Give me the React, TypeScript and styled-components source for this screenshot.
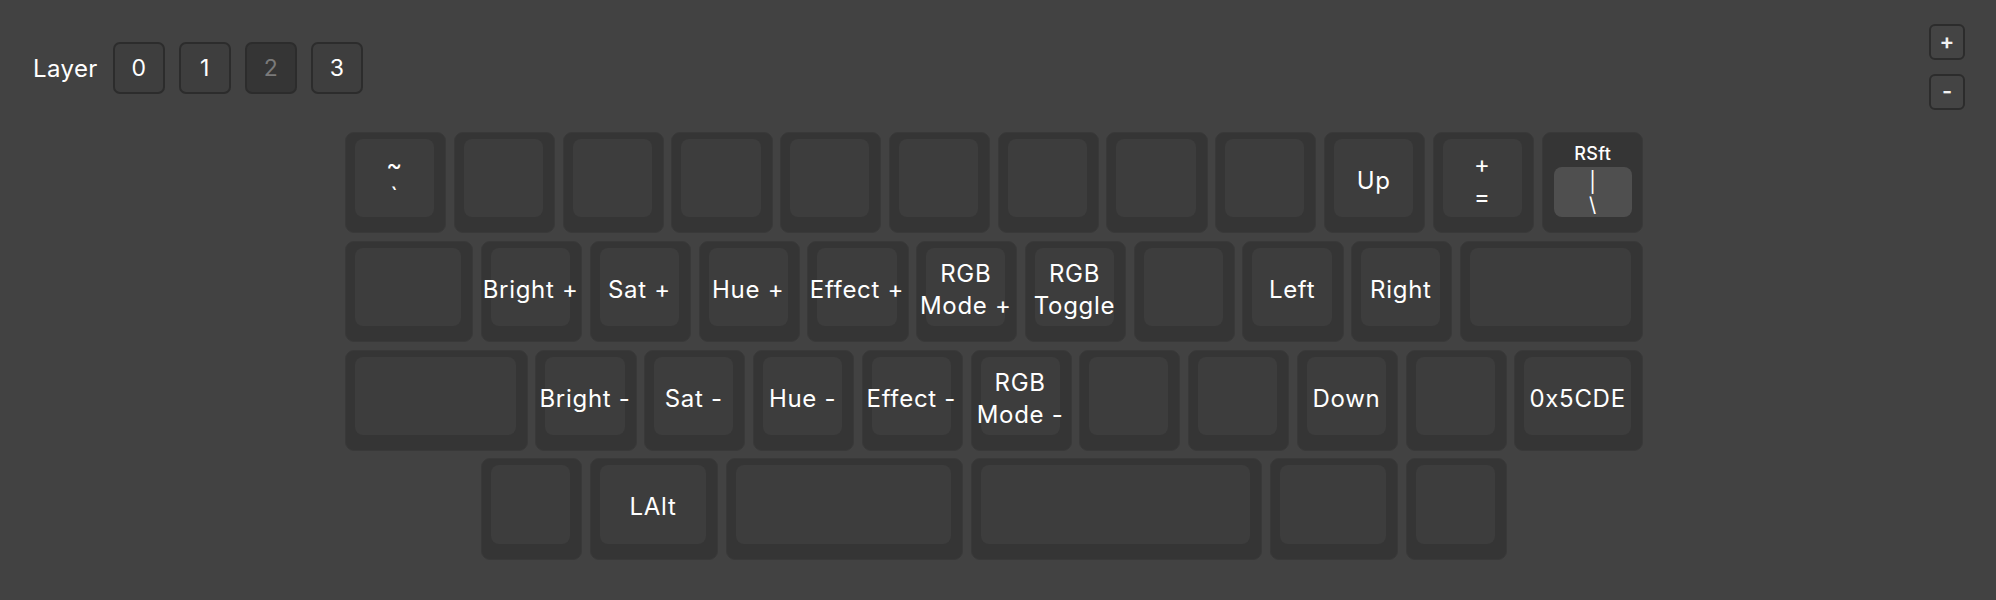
import styled, { createGlobalStyle } from "styled-components";

const U = 108.8;
const GAP = 7.6;

type KeyDef = {
  w?: number;
  lines?: string[];
  mod?: string;
};

const rows: { offset?: number; keys: KeyDef[] }[] = [
  {
    keys: [
      { lines: ["~", "`"] },
      {},
      {},
      {},
      {},
      {},
      {},
      {},
      {},
      { lines: ["Up"] },
      { lines: ["+", "="] },
      { mod: "RSft", lines: ["|", "\\"] },
    ],
  },
  {
    keys: [
      { w: 1.25 },
      { lines: ["Bright +"] },
      { lines: ["Sat +"] },
      { lines: ["Hue +"] },
      { lines: ["Effect +"] },
      { lines: ["RGB", "Mode +"] },
      { lines: ["RGB", "Toggle"] },
      {},
      { lines: ["Left"] },
      { lines: ["Right"] },
      { w: 1.75 },
    ],
  },
  {
    keys: [
      { w: 1.75 },
      { lines: ["Bright -"] },
      { lines: ["Sat -"] },
      { lines: ["Hue -"] },
      { lines: ["Effect -"] },
      { lines: ["RGB", "Mode -"] },
      {},
      {},
      { lines: ["Down"] },
      {},
      { w: 1.25, lines: ["0x5CDE"] },
    ],
  },
  {
    offset: 1.25,
    keys: [
      {},
      { w: 1.25, lines: ["LAlt"] },
      { w: 2.25 },
      { w: 2.75 },
      { w: 1.25 },
      {},
    ],
  },
];

const GlobalStyle = createGlobalStyle`
  html, body {
    margin: 0;
    padding: 0;
    background: #424242;
  }
  body {
    font-family: Inter, "Noto Sans", sans-serif;
    color: #fff;
  }
`;

const Page = styled.div`
  width: 1996px;
  height: 600px;
  background: #424242;
  overflow: hidden;
`;

const TopBar = styled.div`
  display: flex;
  justify-content: space-between;
  align-items: flex-start;
  padding: 24px 31px 0 33px;
`;

const LayerPicker = styled.div`
  display: flex;
  align-items: center;
  gap: 14px;
  margin-top: 18px;
`;

const LayerLabel = styled.span`
  font-size: 24px;
  letter-spacing: 0.4px;
  margin-right: 1px;
`;

const LayerButton = styled.button<{ $active?: boolean }>`
  width: 52px;
  height: 52px;
  box-sizing: border-box;
  padding: 0;
  border: 2px solid #2c2c2c;
  border-radius: 7px;
  background: ${(p) => (p.$active ? "#353535" : "#3e3e3e")};
  color: ${(p) => (p.$active ? "#7a7a7a" : "#fff")};
  font-family: Inter, sans-serif;
  font-size: 23px;
`;

const ZoomControls = styled.div`
  display: flex;
  flex-direction: column;
  gap: 14px;
`;

const ZoomButton = styled.button`
  width: 36px;
  height: 36px;
  box-sizing: border-box;
  padding: 0 0 2px;
  border: 2px solid #2c2c2c;
  border-radius: 6px;
  background: #444;
  color: #f2f2f2;
  font-family: Inter, sans-serif;
  font-size: 22px;
  font-weight: 600;
  line-height: 1;
`;

const Keyboard = styled.div`
  display: flex;
  flex-direction: column;
  gap: ${GAP}px;
  margin-top: 22px;
  padding-left: 345px;
`;

const Row = styled.div<{ $offset: number }>`
  display: flex;
  gap: ${GAP}px;
  padding-left: ${(p) => p.$offset * U}px;
`;

const Key = styled.div<{ $w: number; $mod?: boolean }>`
  flex: none;
  display: flex;
  flex-direction: column;
  box-sizing: border-box;
  width: ${(p) => p.$w * U - GAP}px;
  height: ${U - GAP}px;
  padding: ${(p) => (p.$mod ? "6px 10px 15px 11px" : "6px 11px 15px 9px")};
  background: #353535;
  border: 1px solid #393939;
  border-radius: 9px;
`;

const ModLabel = styled.div`
  height: 31px;
  display: flex;
  align-items: center;
  justify-content: center;
  font-size: 18px;
  font-weight: 500;
  letter-spacing: 0.3px;
`;

const Face = styled.div<{ $lit?: boolean; $small?: boolean }>`
  flex: 1;
  display: flex;
  flex-direction: column;
  align-items: center;
  justify-content: center;
  padding-top: ${(p) => (p.$small ? 4 : 6)}px;
  background: ${(p) => (p.$lit ? "#4f4f4f" : "#3d3d3d")};
  border-radius: 8px;
  white-space: nowrap;
  text-align: center;
  font-size: ${(p) => (p.$small ? 20 : 24)}px;
  line-height: ${(p) => (p.$small ? 23 : 32)}px;
  letter-spacing: ${(p) => (p.$small ? 0 : 0.7)}px;
`;

const KeyCap = ({ k }: { k: KeyDef }) => (
  <Key $w={k.w ?? 1} $mod={!!k.mod}>
    {k.mod && <ModLabel>{k.mod}</ModLabel>}
    <Face $lit={!!k.mod} $small={!!k.mod}>
      {(k.lines ?? []).map((line, i) => (
        <span key={i}>{line}</span>
      ))}
    </Face>
  </Key>
);

export default function App() {
  return (
    <Page>
      <GlobalStyle />
      <TopBar>
        <LayerPicker>
          <LayerLabel>Layer</LayerLabel>
          <LayerButton>0</LayerButton>
          <LayerButton>1</LayerButton>
          <LayerButton $active>2</LayerButton>
          <LayerButton>3</LayerButton>
        </LayerPicker>
        <ZoomControls>
          <ZoomButton>+</ZoomButton>
          <ZoomButton>-</ZoomButton>
        </ZoomControls>
      </TopBar>
      <Keyboard>
        {rows.map((row, r) => (
          <Row key={r} $offset={row.offset ?? 0}>
            {row.keys.map((k, i) => (
              <KeyCap key={i} k={k} />
            ))}
          </Row>
        ))}
      </Keyboard>
    </Page>
  );
}
